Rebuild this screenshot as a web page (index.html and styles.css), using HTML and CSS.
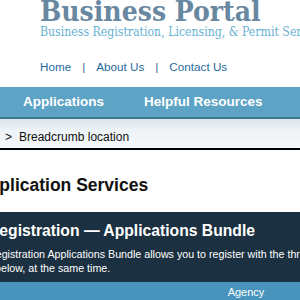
FILE: index.html
```html
<!DOCTYPE html>
<html lang="en">
<head>
<meta charset="utf-8">
<title>Business Portal</title>
<link rel="stylesheet" href="styles.css">
</head>
<body>
<div class="page">
  <header class="masthead">
    <div class="title">Business Portal</div>
    <div class="subtitle">Business Registration, Licensing, &amp; Permit Services</div>
  </header>
  <nav class="toplinks">
    <a href="#">Home</a><span class="sep">|</span><a href="#">About Us</a><span class="sep">|</span><a href="#">Contact Us</a>
  </nav>
  <nav class="mainnav">
    <a href="#">Applications</a>
    <a href="#">Helpful Resources</a>
  </nav>
  <div class="crumbs"><span class="gt">&gt;</span><span>Breadcrumb location</span></div>
  <main class="content">
    <h1 class="page-title">Application Services</h1>
    <section class="bundle">
      <h2 class="bundle-title">Registration — Applications Bundle</h2>
      <p class="bundle-text">Registration Applications Bundle allows you to register with the three agencies below, at the same time.</p>
    </section>
    <div class="table-head">
      <div class="th"></div>
      <div class="th">Agency</div>
      <div class="th"></div>
    </div>
  </main>
</div>
</body>
</html>
```
FILE: styles.css
```css
html, body {
  margin: 0;
  padding: 0;
  background: #fff;
}
body {
  width: 300px;
  height: 300px;
  overflow: hidden;
  font-family: "Liberation Sans", Arial, sans-serif;
}
.page {
  width: 300px;
}
.masthead {
  padding-left: 40px;
  white-space: nowrap;
}
.title {
  font-family: "DejaVu Serif Condensed", "DejaVu Serif", serif;
  font-weight: bold;
  font-size: 28px;
  line-height: 27px;
  margin-top: -2px;
  color: #6888a2;
}
.subtitle {
  font-family: "DejaVu Serif Condensed", "DejaVu Serif", serif;
  font-size: 12.2px;
  line-height: 14px;
  color: #67b1d3;
}
.toplinks {
  margin-top: 21px;
  padding-left: 40px;
  font-size: 11.7px;
  line-height: 14px;
  color: #1f6b9e;
  white-space: nowrap;
}
.toplinks a {
  color: #1f6b9e;
  text-decoration: none;
}
.toplinks .sep {
  margin: 0 11px;
}
.mainnav {
  margin-top: 13px;
  display: flex;
  gap: 40px;
  padding-left: 23px;
  height: 30px;
  line-height: 30px;
  background: #5da3c5;
  border-bottom: 2px solid #3a7894;
  white-space: nowrap;
}
.mainnav a {
  color: #fff;
  font-weight: bold;
  font-size: 13.5px;
  text-decoration: none;
}
.crumbs {
  display: flex;
  gap: 7px;
  height: 18px;
  padding: 11px 0 0 5px;
  font-size: 12px;
  line-height: 14px;
  color: #111;
  background: linear-gradient(#dde5ec, #eef3f7 40%, #f5f8fb);
  border-bottom: 2px solid #000;
  white-space: nowrap;
}
.content {
  margin-left: -24px;
  width: 440px;
}
.page-title {
  margin: 24px 0 16px;
  font-size: 17.5px;
  line-height: 22px;
  font-weight: bold;
  color: #111;
  white-space: nowrap;
}
.bundle {
  background: #1b3040;
  color: #fff;
  padding: 9px 12px 7px 12px;
}
.bundle-title {
  margin: 0;
  font-size: 15.7px;
  line-height: 20px;
  font-weight: bold;
  white-space: nowrap;
}
.bundle-text {
  margin: 7px 0 0;
  width: 388px;
  font-size: 10.7px;
  line-height: 13.5px;
  text-indent: -7px;
  padding-left: 7px;
}
.table-head {
  display: grid;
  grid-template-columns: 210px 120px 1fr;
  background: #4894bd;
  color: #fff;
  font-size: 11px;
  line-height: 13px;
}
.th {
  padding: 4px 0 4px;
  text-align: center;
}
```
